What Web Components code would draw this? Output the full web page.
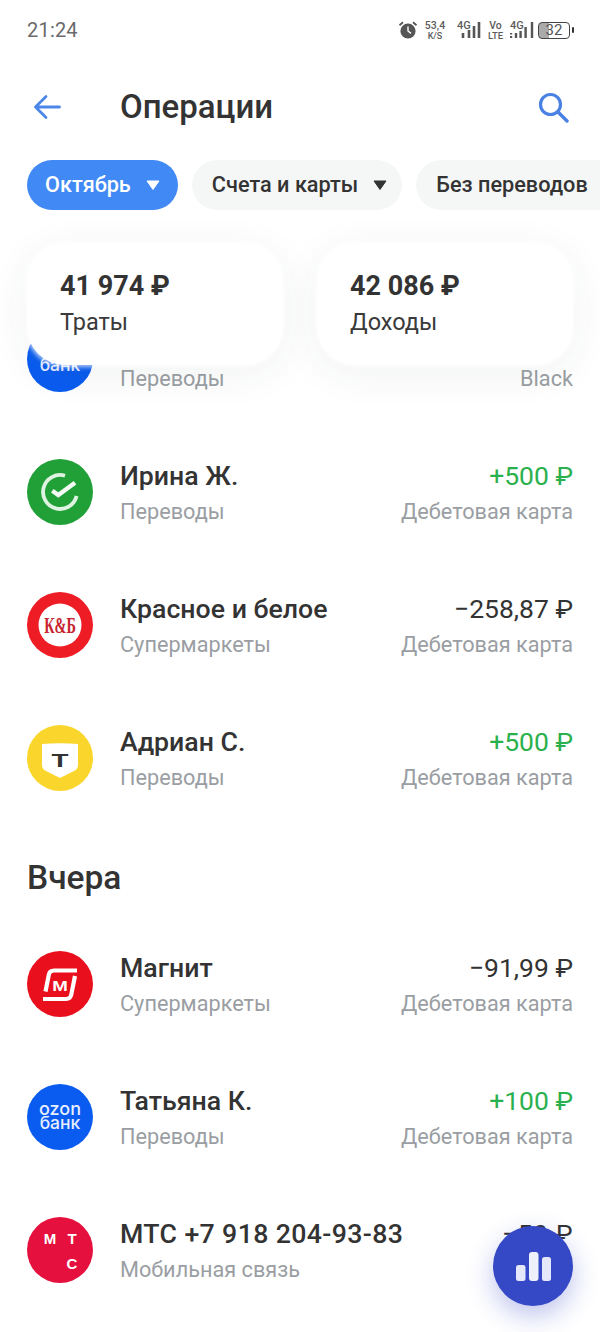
<!DOCTYPE html>
<html lang="ru"><head><meta charset="utf-8"><title>Операции</title>
<style>
html,body{margin:0;padding:0;background:#fff}
body{font-family:Roboto,"Noto Sans",sans-serif;color:#333}
</style></head>
<body>
<ops-app>
  <status-bar slot="top"></status-bar>
  <top-nav slot="top" title="Операции"></top-nav>
  <filter-row slot="top">
    <filter-chip active>Октябрь</filter-chip>
    <filter-chip caret>Счета и карты</filter-chip>
    <filter-chip plain>Без переводов</filter-chip>
  </filter-row>
  <summary-row slot="top">
    <summary-card amount="41 974 ₽">Траты</summary-card>
    <summary-card amount="42 086 ₽">Доходы</summary-card>
  </summary-row>

  <op-row sub="Переводы" account="Black"><brand-logo slot="logo" kind="bank"></brand-logo></op-row>
  <op-row name="Ирина Ж." sub="Переводы" amount="+500 ₽" account="Дебетовая карта" income><brand-logo slot="logo" kind="sber"></brand-logo></op-row>
  <op-row name="Красное и белое" sub="Супермаркеты" amount="−258,87 ₽" account="Дебетовая карта"><brand-logo slot="logo" kind="kb"></brand-logo></op-row>
  <op-row name="Адриан С." sub="Переводы" amount="+500 ₽" account="Дебетовая карта" income><brand-logo slot="logo" kind="tink"></brand-logo></op-row>
  <day-title>Вчера</day-title>
  <op-row name="Магнит" sub="Супермаркеты" amount="−91,99 ₽" account="Дебетовая карта"><brand-logo slot="logo" kind="magnit"></brand-logo></op-row>
  <op-row name="Татьяна К." sub="Переводы" amount="+100 ₽" account="Дебетовая карта" income><brand-logo slot="logo" kind="ozon"></brand-logo></op-row>
  <op-row name="МТС +7 918 204-93-83" sub="Мобильная связь" amount="−50 ₽" wide><brand-logo slot="logo" kind="mts"></brand-logo></op-row>

  <stats-fab slot="over"></stats-fab>
</ops-app>

<script>
function shadow(el, html){ el.attachShadow({mode:'open'}).innerHTML = html; }

customElements.define('ops-app', class extends HTMLElement{
  connectedCallback(){ shadow(this, `<style>
    :host{display:block;position:relative;width:600px;height:1332px;overflow:hidden;background:#fff}
    .top{position:relative;z-index:2;display:flex;flex-direction:column;margin-bottom:-39px;background:linear-gradient(#fff 0 290px,transparent 290px)}
    .list{display:flex;flex-direction:column;gap:67px;padding:0 27px}
  </style>
  <div class="top"><slot name="top"></slot></div>
  <div class="list"><slot></slot></div>
  <slot name="over"></slot>`); }
});

customElements.define('status-bar', class extends HTMLElement{
  connectedCallback(){ shadow(this, `<style>
    :host{display:flex;flex:none;align-items:center;justify-content:space-between;height:60px;padding:0 30px 0 27px;color:#5c5c5c;font-family:Roboto,sans-serif}
    .time{font-size:20px;color:#6a6a6a;letter-spacing:.2px}
    .icons{display:flex;align-items:center;gap:0}
    svg{display:block}
    .st{display:flex;flex-direction:column;align-items:center;font-size:10.5px;line-height:11px;font-weight:500}
    .st small{font-size:9px;line-height:10px}
    .net{position:relative;display:block;width:25px;height:22px}
    .net b{position:absolute;left:0;top:1px;font-size:11px;line-height:12px;font-weight:500}
    .net svg{position:absolute;left:0;top:0}
    .bat{position:relative;width:32px;height:17px;border:1.6px solid #444;border-radius:4px;box-sizing:border-box;font-size:15px;line-height:14px;text-align:center;background:linear-gradient(90deg,#aaa 0 10px,transparent 10px);color:#555}
    .bat::after{content:"";position:absolute;right:-5px;top:4px;width:2px;height:6px;background:#333;border-radius:1px}
  </style>
  <span class="time">21:24</span>
  <span class="icons">
    <svg width="20" height="20" viewBox="0 0 20 20" style="margin-right:6px"><circle cx="10" cy="11" r="7.6" fill="#555"/><path d="M10 6.5V11l3 2.4" fill="none" stroke="#fff" stroke-width="1.4"/><path d="M1.5 5.2 5 2.2M18.500 5.200 15 2.200" stroke="#555" stroke-width="1.8" fill="none"/></svg>
    <span class="st" style="margin-right:11px;width:22px">53,4<small>K/S</small></span>
    <span class="net" style="margin-right:5px"><b>4G</b><svg width="25" height="22"><path d="M6 19v-5M12 19v-8M17 19V7M22 19V3" stroke="#555" stroke-width="2.600" fill="none"/></svg></span>
    <span class="st" style="margin-right:6px;width:17px;font-size:10.5px">Vo<small style="font-size:9.5px">LTE</small></span>
    <span class="net" style="margin-right:3px"><b>4G</b><svg width="25" height="22"><path d="M1 14v1.500M1 17v2M6 19v-5M10.600 19v-7M15.600 19V8M22 19V3" stroke="#555" stroke-width="2.400" fill="none"/></svg></span>
    <span class="bat">32</span>
  </span>`); }
});

customElements.define('top-nav', class extends HTMLElement{
  connectedCallback(){ shadow(this, `<style>
    :host{display:flex;flex:none;align-items:center;height:94px;padding:0 31px 0 33px;box-sizing:border-box}
    svg{display:block;flex:none}
    h1{flex:1;margin:0 0 0 59px;font:500 33px/40px Roboto,sans-serif;color:#333}
  </style>
  <svg width="28" height="26" viewBox="0 0 28 26"><path d="M26.500 13H2.500M13 2.500 2.500 13 13 23.500" fill="none" stroke="#4a87e8" stroke-width="2.800" stroke-linecap="round" stroke-linejoin="round"/></svg>
  <h1>${this.getAttribute('title')}</h1>
  <svg width="31" height="31" viewBox="0 0 31 31"><circle cx="12.500" cy="12.500" r="10" fill="none" stroke="#4a82e4" stroke-width="3.200"/><path d="M20 20l9 9" stroke="#4a82e4" stroke-width="3.400" stroke-linecap="round"/></svg>`); }
});

customElements.define('filter-row', class extends HTMLElement{
  connectedCallback(){ shadow(this, `<style>
    :host{display:flex;flex:none;gap:14px;padding:0 0 0 27px;margin-top:6px;height:50px;overflow:hidden}
  </style><slot></slot>`); }
});

customElements.define('filter-chip', class extends HTMLElement{
  connectedCallback(){
    const a=this.hasAttribute('active'), c=this.hasAttribute('caret');
    shadow(this, `<style>
    :host{display:flex;flex:none;align-items:center;gap:15px;height:50px;box-sizing:border-box;border-radius:25px;padding:0 15px 0 20px;background:#f5f7f7;color:#333;font:500 21.700px/50px Roboto,sans-serif;white-space:nowrap}
    :host([active]){background:#4189f5;color:#fff;padding:0 18px}
    :host([plain]){padding-right:40px}
    svg{display:block}
  </style><slot></slot>${(a||c)?`<svg width="14" height="10" viewBox="0 0 14 10"><path d="M1 1h12L7 9.500z" fill="${a?'#fff':'#333'}" stroke="${a?'#fff':'#333'}" stroke-linejoin="round"/></svg>`:''}`);
  }
});

customElements.define('summary-row', class extends HTMLElement{
  connectedCallback(){ shadow(this, `<style>
    :host{display:flex;flex:none;gap:34px;padding:0 27px;margin-top:33px}
  </style><slot></slot>`); }
});

customElements.define('summary-card', class extends HTMLElement{
  connectedCallback(){ shadow(this, `<style>
    :host{display:block;width:256px;height:122px;box-sizing:border-box;padding:25px 33px 0;border-radius:38px;background:#fff;box-shadow:0 0 4px 2px rgba(255,255,255,.7),0 8px 40px rgba(40,50,60,.07)}
    b{display:block;font:700 27px/36px Roboto,sans-serif;color:#333}
    span{display:block;font:400 23.500px/36px Roboto,sans-serif;color:#3a3a3a}
  </style><b>${this.getAttribute('amount')}</b><span><slot></slot></span>`); }
});

customElements.define('op-row', class extends HTMLElement{
  connectedCallback(){
    const g=n=>this.getAttribute(n)||'';
    shadow(this, `<style>
    :host{display:grid;grid-template-columns:66px 1fr auto;column-gap:27px;height:66px;align-items:center}
    .c{display:flex;flex-direction:column;height:66px;box-sizing:border-box;padding-top:5px;justify-content:center}
    .r{align-items:flex-end}
    .t{font:500 26.700px/32px Roboto,sans-serif;color:#333;white-space:nowrap}
    :host([wide]) .t{letter-spacing:.37px}
    .a{font-weight:400;font-size:26.500px}
    :host([income]) .a{color:#2bb04e}
    .s{font:400 21.700px/34px Roboto,sans-serif;color:#9a9ea3;white-space:nowrap;margin-top:3px}
  </style>
  <slot name="logo"></slot>
  <div class="c"><div class="t">${g('name')||'&nbsp;'}</div><div class="s">${g('sub')}</div></div>
  <div class="c r"><div class="t a">${g('amount')||'&nbsp;'}</div><div class="s">${g('account')||'&nbsp;'}</div></div>`);
  }
});

customElements.define('day-title', class extends HTMLElement{
  connectedCallback(){ shadow(this, `<style>
    :host{display:block;height:40px;margin:0 0 -14px;font:500 33.500px/40px Roboto,sans-serif;color:#333}
  </style><slot></slot>`); }
});

const BANK = `<text x="33" y="45" text-anchor="middle" font-family="Inter,Roboto,sans-serif" font-weight="500" font-size="17.500" fill="#e6eeff">банк</text>`;
const LOGOS = {
 bank:`<circle cx="33" cy="33" r="33" fill="#0a5cf0"/>${BANK}`,
 ozon:`<circle cx="33" cy="33" r="33" fill="#0a5cf0"/>
   <text x="33" y="30.500" text-anchor="middle" font-family="Inter,Roboto,sans-serif" font-weight="500" font-size="18" fill="#e6eeff">ozon</text>${BANK}`,
 sber:`<circle cx="33" cy="33" r="33" fill="#21a038"/>
   <path d="M49.600 37A17 17 0 1 1 38 16.700" fill="none" stroke="#dff3e2" stroke-width="3.800"/>
   <path d="M25.300 31.700 31.300 36 48 23.700" fill="none" stroke="#f2faf3" stroke-width="4.400"/>`,
 kb:`<circle cx="33" cy="33" r="33" fill="#ee1c25"/><circle cx="33" cy="33" r="21.500" fill="#fff"/>
   <text transform="translate(33 41) scale(.62 1)" text-anchor="middle" font-family="Liberation Serif,serif" font-weight="700" font-size="23" fill="#c8242e">К&amp;Б</text>`,
 tink:`<circle cx="33" cy="33" r="33" fill="#fad62c"/>
   <path d="M15 19Q33 17.500 51 19V40Q51 44 47 46L33 53 19 46Q15 44 15 40z" fill="#fff"/>
   <text transform="translate(33 41.500) scale(1.500 1)" text-anchor="middle" font-family="Liberation Sans,sans-serif" font-weight="700" font-size="18.500" fill="#333">Т</text>`,
 magnit:`<circle cx="33" cy="33" r="33" fill="#ea0f1c"/>
   <path d="M50 19.500H27Q22.500 19.500 21.800 24L18.500 40.500M16 48H39Q43.500 48 44.300 43.500L48 25" fill="none" stroke="#fff" stroke-width="4.200"/>
   <text transform="translate(33 39.500) scale(1.250 1)" text-anchor="middle" font-family="Liberation Sans,sans-serif" font-weight="700" font-size="15" fill="#fff">М</text>`,
 mts:`<circle cx="33" cy="33" r="33" fill="#e5103d"/>
   <g font-family="Liberation Sans,sans-serif" font-weight="700" font-size="15" fill="#fff" text-anchor="middle"><text x="23" y="26.500">М</text><text x="45" y="26.500">Т</text><text x="45" y="51.500">С</text></g>`
};
customElements.define('brand-logo', class extends HTMLElement{
  connectedCallback(){ shadow(this, `<style>:host{display:block;width:66px;height:66px}svg{display:block}</style>
    <svg width="66" height="66" viewBox="0 0 66 66">${LOGOS[this.getAttribute('kind')]}</svg>`); }
});

customElements.define('stats-fab', class extends HTMLElement{
  connectedCallback(){ shadow(this, `<style>
    :host{position:absolute;z-index:3;left:493px;top:1226px;width:80px;height:80px;border-radius:50%;background:#3548c6;box-shadow:0 10px 26px rgba(53,72,198,.32);display:flex;align-items:center;justify-content:center}
    svg{display:block}
  </style><svg width="36" height="32" viewBox="0 0 36 32"><rect x="1" y="15" width="9.500" height="16" rx="2.500" fill="#e4e8fa"/><rect x="14" y="2" width="9.500" height="29" rx="3" fill="#eef1fc"/><rect x="27" y="7" width="9" height="24" rx="2.500" fill="#e4e8fa"/></svg>`); }
});
</script>
</body></html>
